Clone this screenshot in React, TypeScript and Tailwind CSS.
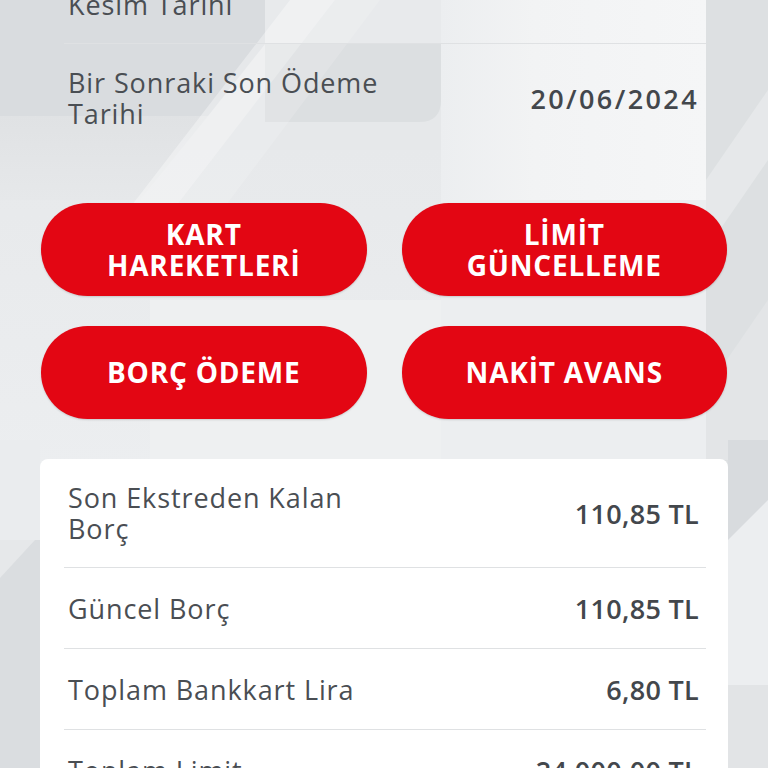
import React from "react";

const FONT = { fontFamily: '"Open Sans", "Noto Sans", sans-serif' };

function Background() {
  return (
    <svg
      className="absolute inset-0 w-full h-full"
      viewBox="0 0 768 768"
      preserveAspectRatio="none"
    >
      <defs>
        <linearGradient id="lightR" x1="0" y1="0" x2="1" y2="0">
          <stop offset="0" stopColor="#eceef0" />
          <stop offset="0.35" stopColor="#f2f3f4" />
          <stop offset="1" stopColor="#f5f6f7" />
        </linearGradient>
        <linearGradient id="midV" x1="0" y1="0" x2="0" y2="1">
          <stop offset="0" stopColor="#e7e9eb" />
          <stop offset="1" stopColor="#eceef0" />
        </linearGradient>
        <linearGradient id="tlFade" x1="0" y1="0" x2="0" y2="1">
          <stop offset="0" stopColor="#e0e2e4" />
          <stop offset="1" stopColor="#e6e8ea" />
        </linearGradient>
      </defs>
      <rect x="0" y="0" width="768" height="768" fill="#e6e8ea" />
      <rect x="0" y="150" width="768" height="320" fill="url(#midV)" />
      <polygon points="150,300 460,300 460,460 150,460" fill="#eef0f1" />
      <polygon points="0,0 300,0 208,116 0,116" fill="#d9dcdf" />
      <polygon points="0,116 208,116 140,200 0,200" fill="url(#tlFade)" />
      <path d="M265,43 L441,43 L441,100 Q441,122 419,122 L265,122 Z" fill="#dcdfe1" />
      <polygon points="265,0 441,0 441,43 265,43" fill="#e8eaec" />
      <polygon points="290,0 335,0 150,240 105,240" fill="#ffffff" opacity="0.35" />
      <polygon points="335,0 380,0 200,240 150,240" fill="#ffffff" opacity="0.15" />
      <rect x="441" y="0" width="265" height="200" fill="url(#lightR)" />
      <rect x="441" y="200" width="265" height="260" fill="#eceef0" />
      <rect x="706" y="0" width="62" height="470" fill="#dde0e2" />
      <polygon points="768,90 768,160 706,250 706,180" fill="#e6e8ea" />
      <polygon points="768,300 768,460 706,460 706,390" fill="#e3e5e7" />
      <rect x="0" y="440" width="40" height="100" fill="#eaecee" />
      <polygon points="0,578 35,540 40,540 40,768 0,768" fill="#dadde0" />
      <rect x="728" y="440" width="40" height="100" fill="#d8dbde" />
      <rect x="728" y="540" width="40" height="145" fill="#eceef0" />
      <polygon points="728,540 768,500 768,540" fill="#eceef0" />
      <rect x="728" y="685" width="40" height="83" fill="#e2e4e6" />
    </svg>
  );
}

function Row({
  label,
  value,
  last,
  valueCls = "tracking-[0.3px]",
}: {
  label: string[];
  value: string;
  last?: boolean;
  valueCls?: string;
}) {
  return (
    <div
      className={
        "ml-[24px] mr-[22px] min-h-[81px] py-[23px] pl-[4px] pr-[7px] flex items-center justify-between " +
        (last ? "" : "border-b border-[#dfe1e3]")
      }
    >
      <div className="text-[27px] leading-[31px] text-[#4a4e53] font-normal tracking-[0.9px]">
        {label.map((l, i) => (
          <div key={i} className="whitespace-nowrap">
            {l}
          </div>
        ))}
      </div>
      <div
        className={
          "text-[27px] leading-[31px] text-[#43474c] font-semibold whitespace-nowrap " +
          valueCls
        }
      >
        {value}
      </div>
    </div>
  );
}

function Btn({ lines }: { lines: string[] }) {
  return (
    <div className="h-[93px] rounded-full bg-[#e30613] flex flex-col items-center justify-center text-white font-bold text-[28px] leading-[31px] tracking-[0.8px] shadow-[0_1px_2px_rgba(0,0,0,0.15)]">
      {lines.map((l, i) => (
        <div key={i} className="whitespace-nowrap">
          {l}
        </div>
      ))}
    </div>
  );
}

export default function App() {
  return (
    <div className="relative w-full h-[768px] overflow-hidden" style={FONT}>
      <Background />
      <div className="relative px-[40px]">
        <div className="mt-[-65px]">
          <Row
            label={["Hesap", "Kesim Tarihi"]}
            value="10/06/2024"
            valueCls="tracking-[2.4px]"
          />
          <Row
            label={["Bir Sonraki Son Ödeme", "Tarihi"]}
            value="20/06/2024"
            valueCls="tracking-[2.4px]"
            last
          />
        </div>
        <div className="mt-[51px] ml-[1px] mr-[1px] grid grid-cols-2 gap-x-[35px] gap-y-[30px]">
          <Btn lines={["KART", "HAREKETLERİ"]} />
          <Btn lines={["LİMİT", "GÜNCELLEME"]} />
          <Btn lines={["BORÇ ÖDEME"]} />
          <Btn lines={["NAKİT AVANS"]} />
        </div>
        <div className="mt-[40px] bg-white rounded-[8px]">
          <Row label={["Son Ekstreden Kalan", "Borç"]} value="110,85 TL" />
          <Row label={["Güncel Borç"]} value="110,85 TL" />
          <Row label={["Toplam Bankkart Lira"]} value="6,80 TL" />
          <Row label={["Toplam Limit"]} value="24.000,00 TL" last />
        </div>
      </div>
    </div>
  );
}
